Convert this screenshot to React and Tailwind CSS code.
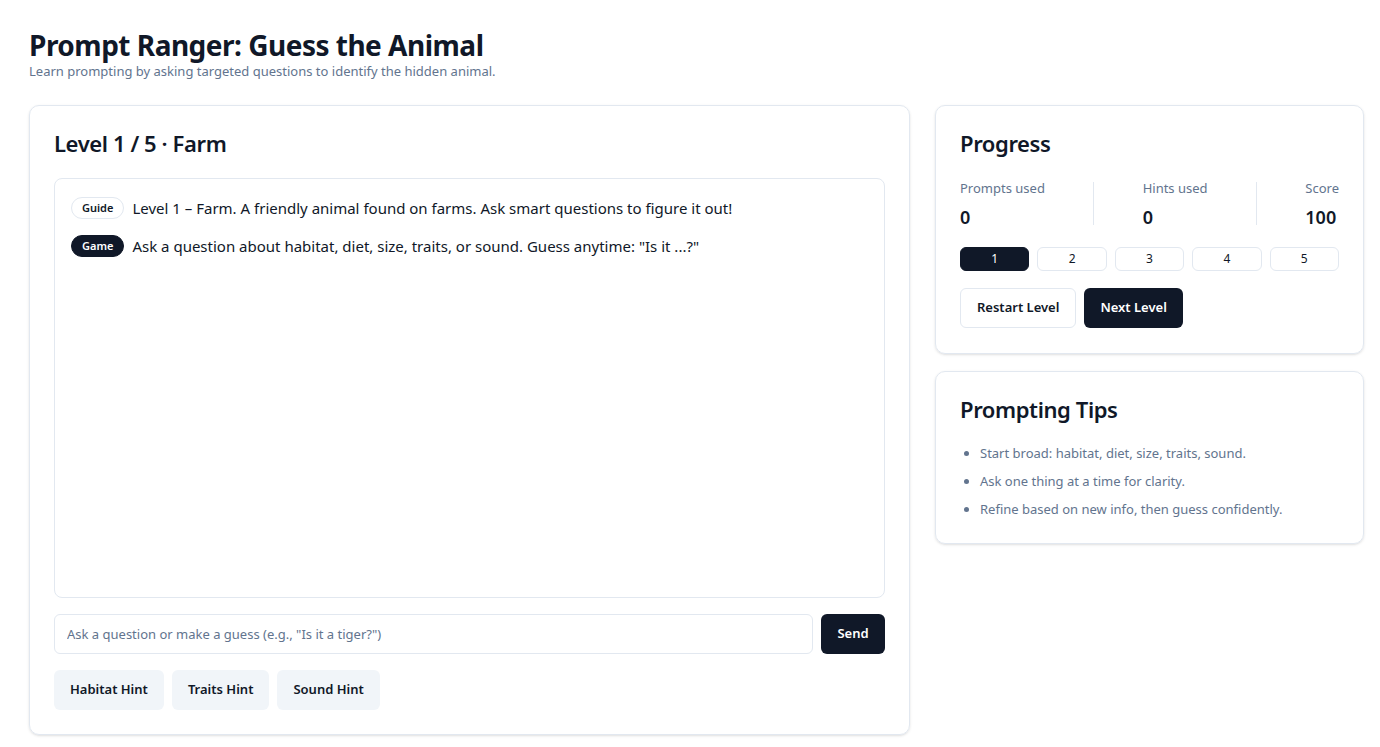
import React, { useState } from 'react';

const tips = [
  'Start broad: habitat, diet, size, traits, sound.',
  'Ask one thing at a time for clarity.',
  'Refine based on new info, then guess confidently.',
];

const messages = [
  {
    role: 'Guide',
    text: 'Level 1 – Farm. A friendly animal found on farms. Ask smart questions to figure it out!',
  },
  {
    role: 'Game',
    text: 'Ask a question about habitat, diet, size, traits, or sound. Guess anytime: "Is it ...?"',
  },
];

function Stat({ label, value }) {
  return (
    <div>
      <div className="text-[13px] text-slate-500 leading-5">{label}</div>
      <div className="mt-[7px] text-[18px] font-semibold text-gray-900 leading-6">{value}</div>
    </div>
  );
}

export default function App() {
  const [question, setQuestion] = useState('');
  const [level, setLevel] = useState(1);

  return (
    <div
      className="min-h-screen bg-white text-gray-900 pl-[29px] pr-[16px] pt-[28px]"
      style={{ fontFamily: '"Noto Sans", "Open Sans", sans-serif' }}
    >
      <h1 className="text-[28px] font-bold leading-[34px] tracking-[-0.5px]">Prompt Ranger: Guess the Animal</h1>
      <p className="text-[13px] text-slate-500 leading-[18px]">
        Learn prompting by asking targeted questions to identify the hidden animal.
      </p>

      <div className="mt-[25px] grid grid-cols-[881px_429px] gap-[25px] items-start">
        {/* Game card */}
        <div className="rounded-[10px] border border-slate-200 shadow-sm px-6 pt-[22px] pb-6">
          <h2 className="text-[22px] font-semibold leading-[30px] tracking-[-0.4px]">Level 1 / 5 · Farm</h2>

          <div className="mt-5 h-[420px] rounded-lg border border-slate-200 px-4 pt-[16px]">
            <div className="flex flex-col gap-[12px]">
              {messages.map((m) => (
                <div key={m.role} className="flex items-center gap-2">
                  <span
                    className={`inline-flex h-[22px] items-center rounded-full px-[10px] text-[11px] font-semibold ${
                      m.role === 'Game'
                        ? 'bg-gray-900 text-white border border-gray-900'
                        : 'bg-white text-gray-900 border border-slate-200'
                    }`}
                  >
                    {m.role}
                  </span>
                  <span className="text-[15px] leading-[26px] text-gray-900">{m.text}</span>
                </div>
              ))}
            </div>
          </div>

          <div className="mt-4 flex gap-2">
            <input
              value={question}
              onChange={(e) => setQuestion(e.target.value)}
              placeholder={'Ask a question or make a guess (e.g., "Is it a tiger?")'}
              className="h-10 flex-1 rounded-md border border-slate-200 px-3 text-[13px] text-gray-900 placeholder:text-slate-500 outline-none"
            />
            <button className="h-10 w-16 rounded-md bg-gray-900 text-[13px] font-semibold text-white">Send</button>
          </div>

          <div className="mt-4 flex gap-2">
            {['Habitat Hint', 'Traits Hint', 'Sound Hint'].map((h) => (
              <button key={h} className="h-10 rounded-md bg-slate-100 px-4 text-[13px] font-semibold text-gray-900">
                {h}
              </button>
            ))}
          </div>
        </div>

        {/* Right column */}
        <div className="flex flex-col gap-[17px]">
          <div className="rounded-[10px] border border-slate-200 shadow-sm px-6 pt-[22px] pb-[25px]">
            <h2 className="text-[22px] font-semibold leading-[30px] tracking-[-0.4px]">Progress</h2>
            <div className="mt-5 flex justify-between">
              <Stat label="Prompts used" value="0" />
              <div className="w-px bg-slate-200 my-[4px]" />
              <Stat label="Hints used" value="0" />
              <div className="w-px bg-slate-200 my-[4px]" />
              <Stat label="Score" value="100" />
            </div>
            <div className="mt-[18px] grid grid-cols-5 gap-2">
              {[1, 2, 3, 4, 5].map((n) => (
                <button
                  key={n}
                  onClick={() => setLevel(n)}
                  className={`h-6 rounded-md border text-[12px] ${
                    n === level
                      ? 'bg-gray-900 border-gray-900 text-white'
                      : 'bg-white border-slate-200 text-gray-900'
                  }`}
                >
                  {n}
                </button>
              ))}
            </div>
            <div className="mt-[17px] flex gap-2">
              <button className="h-10 rounded-md border border-slate-200 bg-white px-4 text-[13px] font-semibold">
                Restart Level
              </button>
              <button className="h-10 rounded-md bg-gray-900 px-4 text-[13px] font-semibold text-white">
                Next Level
              </button>
            </div>
          </div>

          <div className="rounded-[10px] border border-slate-200 shadow-sm px-6 pt-[22px] pb-4">
            <h2 className="text-[22px] font-semibold leading-[30px] tracking-[-0.4px]">Prompting Tips</h2>
            <ul className="mt-[19px] list-disc pl-5 text-[13px] text-slate-500 marker:text-slate-500">
              {tips.map((t) => (
                <li key={t} className="leading-[20px] mb-2">
                  {t}
                </li>
              ))}
            </ul>
          </div>
        </div>
      </div>
    </div>
  );
}
